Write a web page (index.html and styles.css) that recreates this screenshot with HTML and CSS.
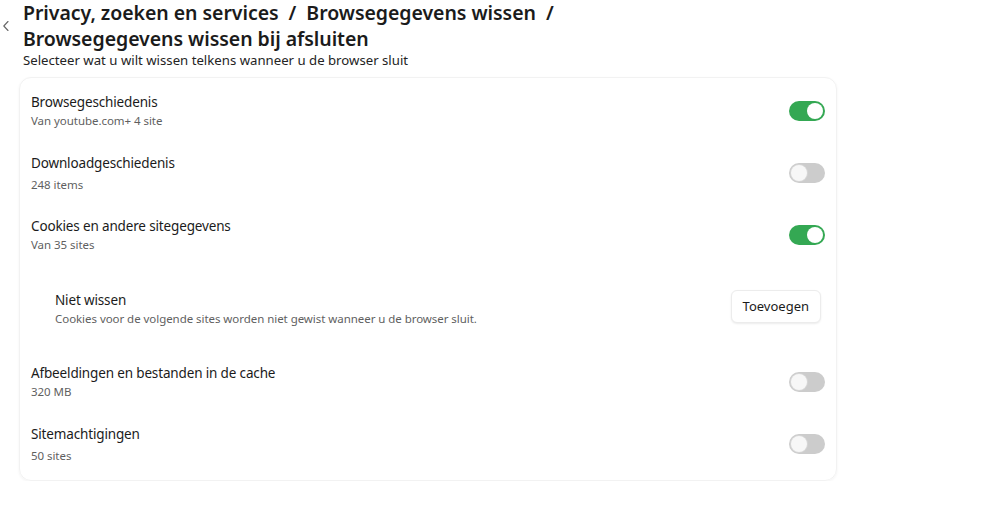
FILE: index.html
```html
<!DOCTYPE html>
<html lang="nl">
<head>
<meta charset="UTF-8">
<meta name="viewport" content="width=device-width, initial-scale=1.0">
<title>Browsegegevens wissen bij afsluiten</title>
<link rel="stylesheet" href="styles.css">
</head>
<body>

<div class="page">
  <div class="header">
    <button class="back-btn" aria-label="Terug">
      <svg width="8" height="12" viewBox="0 0 8 12"><path d="M6 1.5 L1.8 6 L6 10.5" fill="none" stroke="#666" stroke-width="1.1" stroke-linecap="round" stroke-linejoin="round"/></svg>
    </button>
    <h1>Privacy, zoeken en services &nbsp;/&nbsp; Browsegegevens wissen &nbsp;/<br>Browsegegevens wissen bij afsluiten</h1>
  </div>
  <p class="subtitle">Selecteer wat u wilt wissen telkens wanneer u de browser sluit</p>

  <div class="card">
    <div class="row">
      <div class="row-text">
        <div class="row-title">Browsegeschiedenis</div>
        <div class="row-desc">Van youtube.com+ 4 site</div>
      </div>
      <div class="toggle on"></div>
    </div>
    <div class="row">
      <div class="row-text">
        <div class="row-title">Downloadgeschiedenis</div>
        <div class="row-desc spaced">248 items</div>
      </div>
      <div class="toggle"></div>
    </div>
    <div class="row">
      <div class="row-text">
        <div class="row-title">Cookies en andere sitegegevens</div>
        <div class="row-desc">Van 35 sites</div>
      </div>
      <div class="toggle on"></div>
    </div>
    <div class="row sub-row">
      <div class="row-text">
        <div class="row-title">Niet wissen</div>
        <div class="row-desc">Cookies voor de volgende sites worden niet gewist wanneer u de browser sluit.</div>
      </div>
      <button class="btn">Toevoegen</button>
    </div>
    <div class="row">
      <div class="row-text">
        <div class="row-title">Afbeeldingen en bestanden in de cache</div>
        <div class="row-desc">320 MB</div>
      </div>
      <div class="toggle"></div>
    </div>
    <div class="row">
      <div class="row-text">
        <div class="row-title">Sitemachtigingen</div>
        <div class="row-desc spaced">50 sites</div>
      </div>
      <div class="toggle"></div>
    </div>
  </div>
</div>

</body>
</html>
```

FILE: styles.css
```css
body {
  margin: 0;
  font-family: 'Noto Sans', 'Open Sans', sans-serif;
  background: #fff;
  color: #1b1b1b;
}
.page {
  width: 837px;
}
.header {
  display: flex;
  align-items: center;
}
.back-btn {
  width: 23px;
  padding: 0 0 0 2px;
  background: none;
  border: none;
  display: flex;
  align-items: center;
}
.header h1 {
  margin: 0;
  font-size: 19.5px;
  font-weight: 600;
  line-height: 26px;
  letter-spacing: -0.05px;
}
.subtitle {
  margin: 0 0 0 23px;
  font-size: 13.2px;
  line-height: 16px;
  color: #242424;
}
.card {
  margin: 9px 0 0 19px;
  padding: 2px 11px 5px;
  border: 1px solid #f2f2f2;
  border-radius: 12px;
  box-shadow: 0 1px 3px rgba(0,0,0,0.05);
}
.row {
  height: 62px;
  display: flex;
  align-items: center;
  justify-content: space-between;
}
.sub-row {
  height: 85px;
  padding: 0 4px 0 24px;
}
.sub-row .btn {
  margin-bottom: 5px;
}
.row-title {
  font-size: 13.5px;
  line-height: 18px;
  color: #1b1b1b;
  letter-spacing: -0.15px;
}
.row-desc {
  font-size: 11.5px;
  line-height: 16px;
  color: #5f5f5f;
  margin-top: 2px;
  letter-spacing: -0.05px;
}
.row-desc.spaced {
  margin-top: 5px;
}
.toggle {
  position: relative;
  width: 36px;
  height: 20px;
  border-radius: 10px;
  background: #cccccc;
  box-sizing: border-box;
}
.toggle::after {
  content: '';
  position: absolute;
  top: 2px;
  left: 2px;
  width: 16px;
  height: 16px;
  border-radius: 50%;
  background: #f7f7f7;
  box-shadow: 0 0 0 1px #d6d6d6;
}
.toggle.on {
  background: #34a853;
}
.toggle.on::after {
  left: 18px;
  background: #fff;
  box-shadow: none;
}
.btn {
  font-family: inherit;
  font-size: 13px;
  color: #1b1b1b;
  background: #fff;
  border: 1px solid #ececec;
  border-radius: 6px;
  padding: 0 11px;
  height: 33px;
  box-shadow: 0 1px 2px rgba(0,0,0,0.08);
}
```
